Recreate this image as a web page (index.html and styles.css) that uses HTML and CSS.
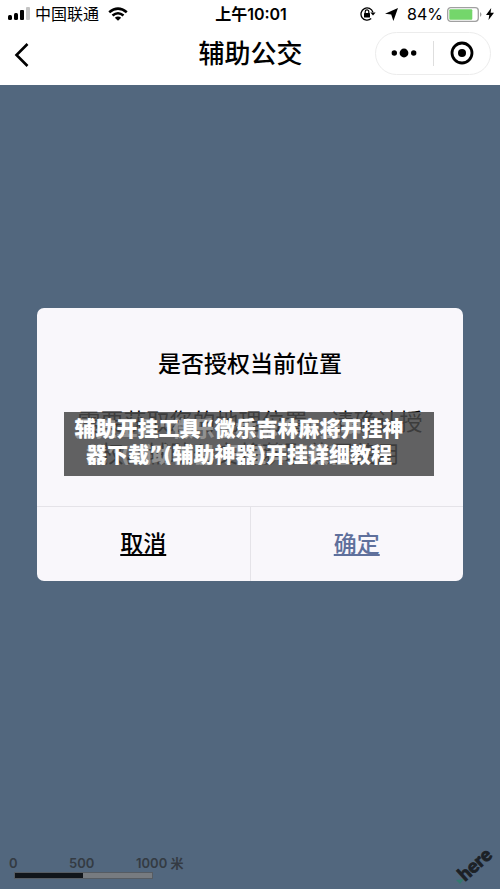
FILE: index.html
```
<!DOCTYPE html>
<html lang="zh-CN">

<head>
    <meta charset="utf-8" />
    <meta name="viewport" content="width=device-width, initial-scale=1" />
    <title>辅助公交</title>
    <link rel="stylesheet" href="styles.css">
</head>

<body>
    <header>
        <div class="status-bar">
            <div class="status-left">
                <svg class="signal" width="22" height="14" viewBox="0 0 22 14">
                    <rect x="0" y="8" width="4" height="5" rx="1.5" />
                    <rect x="6" y="6" width="4" height="7" rx="1.5" />
                    <rect x="12" y="3" width="4" height="10" rx="1" />
                    <rect x="18" y="0" width="4" height="13" rx="1" fill="#c4c4c4" />
                </svg>
                <span>中国联通</span>
                <svg class="wifi" width="20" height="14" viewBox="0 0 20 14" fill="none" stroke="#000" stroke-width="2.6">
                    <path d="M1.2 5.2Q10 -2 18.8 5.2M4.5 8.5Q10 4 15.5 8.5" />
                    <path d="M10 13.8L6.8 10.7Q10 8.4 13.2 10.7Z" fill="#000" stroke="none" />
                </svg>
            </div>
            <span class="time">上午10:01</span>
            <div class="status-right">
                <svg width="16" height="14" viewBox="0 0 16 14">
                    <path d="M12.9 5.2A6.1 6.1 0 1 0 11.2 11.6" fill="none" stroke="#000" stroke-width="1.3" />
                    <path d="M10.4 5.5H15.6L13 8.5Z" />
                    <rect x="4" y="6" width="6" height="4.5" rx=".5" />
                    <path d="M5.2 6V4.7A1.8 1.8 0 0 1 8.8 4.7V6" fill="none" stroke="#000" stroke-width="1.2" />
                </svg>
                <svg class="arrow" width="13" height="13" viewBox="0 0 13 13">
                    <path d="M13 0L0 5.8L6.2 6.4L8.4 13Z" />
                </svg>
                <span>84%</span>
                <svg class="battery" width="36" height="15" viewBox="0 0 36 15">
                    <rect x=".7" y=".7" width="30.6" height="13.6" rx="3" fill="#fff" stroke="#a0a0a0" stroke-width="1.3" />
                    <rect x="2.3" y="2.3" width="23" height="10.4" rx="1" fill="#74d66b" />
                    <path d="M33 5Q36 7.5 33 10Z" fill="#a0a0a0" />
                </svg>
                <svg width="8" height="12" viewBox="0 0 8 12">
                    <path d="M5.2 0L0 7H3.3L2.5 12L8 4.7H4.6Z" />
                </svg>
            </div>
        </div>
        <div class="nav-bar">
            <button type="button" class="back" aria-label="返回">
                <svg width="16" height="24" viewBox="0 0 16 24" fill="none" stroke="#000" stroke-width="2.6">
                    <path d="M13.5 1L2.5 12L13.5 23" />
                </svg>
            </button>
            <h1>辅助公交</h1>
            <div class="capsule">
                <button type="button" aria-label="更多">
                    <svg width="26" height="10" viewBox="0 0 26 10">
                        <circle cx="3.3" cy="5" r="2.7" />
                        <circle cx="13" cy="5" r="4.4" />
                        <circle cx="22.7" cy="5" r="2.7" />
                    </svg>
                </button>
                <button type="button" aria-label="关闭">
                    <svg width="24" height="24" viewBox="0 0 24 24">
                        <circle cx="12" cy="12" r="10" fill="none" stroke="#000" stroke-width="2.8" />
                        <circle cx="12" cy="12" r="4" />
                    </svg>
                </button>
            </div>
        </div>
    </header>

    <main>
        <section class="dialog" role="dialog" aria-labelledby="dialog-title">
            <h2 id="dialog-title">是否授权当前位置</h2>
            <div class="message">
                <p>需要获取您的地理位置，请确认授权，辅助公交将获取位置使用</p>
                <div class="banner"><span>辅助</span>开挂工具“微乐吉林麻将开挂神<br><span>器下</span>载”(辅助神器)开挂详细教程</div>
            </div>
            <div class="actions">
                <a href="#" class="cancel">取消</a>
                <a href="#" class="confirm">确定</a>
            </div>
        </section>
    </main>

    <footer>
        <div class="scale">
            <div class="scale-labels">
                <span>0</span>
                <span>500</span>
                <span>1000 米</span>
            </div>
            <div class="scale-line"></div>
        </div>
        <svg class="here" width="46" height="42" viewBox="0 0 46 42">
            <path d="M7 38L15 37L11 42Z" fill="#34786f" />
            <text x="16" y="40" transform="rotate(-42 16 40)">here</text>
        </svg>
    </footer>
</body>

</html>
```
FILE: styles.css
```
* {
    box-sizing: border-box;
}

body {
    display: flex;
    flex-direction: column;
    min-height: 100vh;
    margin: 0;
    background-color: #52677e;
    color: #000;
    font-family: "Liberation Sans", "Noto Sans CJK SC", sans-serif;
}

svg {
    display: block;
    flex-shrink: 0;
}

button {
    padding: 0;
    border: none;
    background: none;
    cursor: pointer;
}

header {
    height: 85px;
    background-color: #fff;
}

.status-bar {
    display: grid;
    grid-template-columns: 1fr auto 1fr;
    align-items: center;
    height: 28px;
    padding: 0 6px 0 8px;
    font-family: Inter, "Noto Sans CJK SC", sans-serif;
    font-size: 16px;
    line-height: 28px;
}

.status-left,
.status-right {
    display: flex;
    align-items: center;
}

.signal {
    margin-right: 5px;
}

.wifi {
    margin-left: 9px;
}

.time {
    font-weight: 600;
}

.status-right {
    justify-content: flex-end;
}

.arrow {
    margin: 0 9px 0 9px;
}

.battery {
    margin: 0 3px 0 4px;
}

.nav-bar {
    display: grid;
    grid-template-columns: 1fr auto 1fr;
    align-items: center;
    height: 50px;
    padding: 0 9px 0 14px;
}

.back {
    justify-self: start;
    padding-top: 4px;
}

h1 {
    margin: 0;
    padding: 2px 4px 0 0;
    font-size: 26px;
    font-weight: 500;
    line-height: 48px;
}

.capsule {
    display: flex;
    justify-self: end;
    align-items: center;
    width: 116px;
    height: 43px;
    border: 1px solid #ececec;
    border-radius: 22px;
}

.capsule button {
    display: flex;
    flex: 1;
    align-items: center;
    justify-content: center;
    height: 25px;
}

.capsule button + button {
    border-left: 1px solid #dedede;
}

main {
    display: flex;
    flex: 1;
    align-items: center;
    justify-content: center;
    padding: 0 37px 37px;
}

.dialog {
    width: 100%;
    border-radius: 7px;
    background-color: #f9f7fb;
    text-align: center;
}

h2 {
    margin: 0;
    padding-top: 40px;
    font-size: 23px;
    font-weight: 500;
    line-height: 32px;
}

.message {
    position: relative;
    padding: 26px 38px 36px;
    color: #000;
    font-size: 23px;
    line-height: 32px;
}

.message p {
    margin: 0;
}

.banner {
    position: absolute;
    top: 32px;
    right: 29px;
    left: 27px;
    height: 64px;
    padding: 4px 20px 0 0;
    background-color: rgba(70, 70, 70, 0.85);
    color: #fff;
    font-family: "DejaVu Sans", "Noto Sans CJK SC", sans-serif;
    font-size: 21px;
    font-weight: 900;
    line-height: 26px;
    text-shadow: -42px 0 #919191;
    white-space: nowrap;
}

.banner span {
    position: relative;
    text-shadow: none;
}

.actions {
    display: flex;
    border-top: 1px solid #e5e3e8;
}

.actions a {
    flex: 1;
    color: #000;
    font-size: 23px;
    font-weight: 500;
    line-height: 74px;
}

.actions .confirm {
    border-left: 1px solid #e5e3e8;
    color: #5f709c;
}

footer {
    display: flex;
    align-items: flex-end;
    justify-content: space-between;
    height: 49px;
    padding: 0 5px 5px 9px;
}

.scale-labels {
    display: grid;
    grid-template-columns: 60px 67px auto;
    color: #343b43;
    font-family: Inter, "Noto Sans CJK SC", sans-serif;
    font-size: 13px;
    font-weight: 600;
    line-height: 17px;
}

.scale-line {
    width: 139px;
    height: 7px;
    margin: 0 0 5px 5px;
    border: 1px solid #565c63;
    background: linear-gradient(to right, #11151a 50%, #777b80 50%);
}

.here text {
    fill: #1c2126;
    stroke: #1c2126;
    stroke-width: 0.8px;
    font-family: Lato, sans-serif;
    font-size: 19px;
    font-weight: 900;
}
```
